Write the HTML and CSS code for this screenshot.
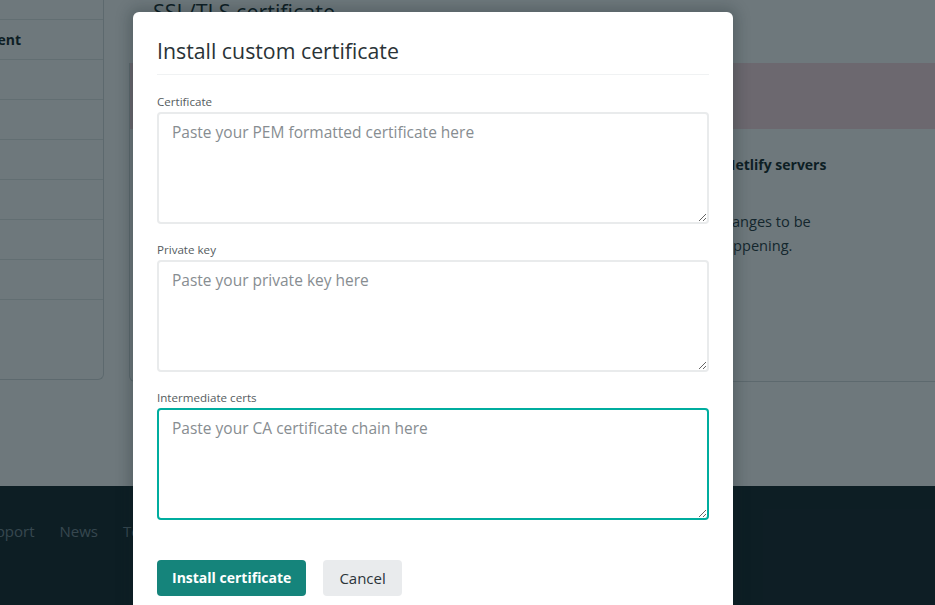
FILE: index.html
```html
<!DOCTYPE html>
<html lang="en">
<head>
<meta charset="utf-8">
<title>Install custom certificate</title>
<link rel="stylesheet" href="styles.css">
</head>
<body>
<div class="page">
  <div class="layout">
    <aside class="sidebar">
      <div class="side-row"></div>
      <div class="side-row bold">HTTPS management</div>
      <div class="side-row"></div>
      <div class="side-row"></div>
      <div class="side-row"></div>
      <div class="side-row"></div>
      <div class="side-row"></div>
      <div class="side-row"></div>
      <div class="side-row"></div>
    </aside>
    <main class="main">
      <h2 class="main-title">SSL/TLS certificate</h2>
      <section class="card">
        <div class="alert"></div>
        <div class="card-body">
          <h3 class="card-heading">Netlify servers</h3>
          <p class="card-text">changes to be<br>happening.</p>
        </div>
      </section>
    </main>
  </div>
  <footer class="footer">
    <nav class="foot-links">
      <a>Docs</a><a>Support</a><a>News</a><a>Terms</a>
    </nav>
  </footer>
</div>

<div class="overlay"></div>

<div class="modal" role="dialog">
  <h1 class="modal-title">Install custom certificate</h1>
  <label class="field-label" for="cert">Certificate</label>
  <textarea id="cert" class="field" placeholder="Paste your PEM formatted certificate here"></textarea>
  <label class="field-label" for="key">Private key</label>
  <textarea id="key" class="field" placeholder="Paste your private key here"></textarea>
  <label class="field-label" for="chain">Intermediate certs</label>
  <textarea id="chain" class="field" placeholder="Paste your CA certificate chain here" autofocus></textarea>
  <div class="actions">
    <button class="btn btn-primary">Install certificate</button>
    <button class="btn btn-secondary">Cancel</button>
  </div>
</div>
</body>
</html>
```
FILE: styles.css
```css
* { box-sizing: border-box; }
html, body {
  margin: 0;
  height: 605px;
  overflow: hidden;
}
body {
  font-family: "Open Sans", "Noto Sans", sans-serif;
  color: #2e3c42;
  background: #ffffff;
  position: relative;
}

/* ---------- background page ---------- */
.page {
  width: 935px;
  height: 605px;
  display: flex;
  flex-direction: column;
  overflow: hidden;
}
.layout {
  height: 506px;
  flex: none;
  display: flex;
  gap: 25px;
  margin-left: -130px;
  margin-top: -20px;
}
.sidebar {
  width: 234px;
  height: 400px;
  flex: none;
  border: 1px solid #d5dadc;
  border-top: none;
  border-radius: 0 0 6px 6px;
  background: #fff;
}
.side-row {
  height: 40px;
  border-bottom: 1px solid #e1e5e7;
  padding: 0 82px 0 0;
  line-height: 40px;
  font-size: 14px;
  color: #0e1e25;
  text-align: right;
  white-space: nowrap;
}
.side-row:last-child { border-bottom: none; }
.side-row.bold { font-weight: 700; }

.main {
  flex: 1;
  min-width: 900px;
}
.main-title {
  margin: 17px 0 0 24px;
  font-size: 21.5px;
  font-weight: 400;
  line-height: 30px;
  color: #0e1e25;
}
.card {
  margin-top: 36px;
  height: 319px;
  border: 1px solid #d5dadc;
  border-top: none;
  border-radius: 0 0 6px 6px;
  background: #fff;
  overflow: hidden;
}
.alert {
  height: 66px;
  background: #fbd6de;
}
.card-body {
  padding: 24px 24px 0 586px;
}
.card-heading {
  margin: 0 0 0 8px;
  font-size: 14px;
  font-weight: 700;
  line-height: 24px;
  color: #0e1e25;
  white-space: nowrap;
}
.card-text {
  margin: 32px 0 0;
  font-size: 14.6px;
  line-height: 24px;
  color: #22343b;
  white-space: nowrap;
}

.footer {
  flex: 1;
  background: #0e1e25;
}
.foot-links {
  display: flex;
  gap: 25px;
  margin-left: -81px;
  padding-top: 35px;
}
.foot-links a {
  font-size: 15px;
  line-height: 20px;
  color: #74868e;
}

/* ---------- overlay ---------- */
.overlay {
  position: absolute;
  inset: 0;
  background: rgba(14, 30, 37, 0.6);
}

/* ---------- modal ---------- */
.modal {
  position: absolute;
  left: 133px;
  top: 12px;
  width: 600px;
  height: 640px;
  background: #fff;
  border-radius: 6px;
  padding: 24px 24px;
  box-shadow: 0 0 14px 4px rgba(14, 30, 37, 0.25);
  display: flex;
  flex-direction: column;
}
.modal-title {
  margin: 0;
  font-size: 21.3px;
  font-weight: 400;
  line-height: 30px;
  color: #2a3337;
  padding-bottom: 8px;
  border-bottom: 1px solid #f0f2f3;
}
.field-label {
  display: block;
  margin-top: 18px;
  font-size: 11.6px;
  line-height: 18px;
  color: #555c60;
}
.field-label + .field { margin-top: 1px; }
.field {
  display: block;
  width: 552px;
  height: 112px;
  margin: 0;
  padding: 6px 13px;
  border: 2px solid #e9ebec;
  border-radius: 4px;
  font-family: inherit;
  font-size: 15.5px;
  line-height: 24px;
  color: #2e3a3f;
  caret-color: #0e1e25;
  resize: vertical;
  outline: none;
  background: #fff;
}
.field::placeholder { color: #878d91; }
.field:focus { border-color: #00ad9f; }
.field + .field-label { margin-top: 17px; }
.actions {
  display: flex;
  gap: 17px;
  margin-top: 40px;
}
.btn {
  height: 36px;
  border: none;
  border-radius: 4px;
  font-family: inherit;
  font-size: 14px;
  line-height: 36px;
  padding: 0 15px;
  cursor: pointer;
}
.btn-primary {
  background: #15847b;
  color: #fff;
  font-weight: 700;
}
.btn-secondary {
  background: #e9ebed;
  color: #2b3439;
  font-size: 15px;
  padding: 0 16px;
}
```
